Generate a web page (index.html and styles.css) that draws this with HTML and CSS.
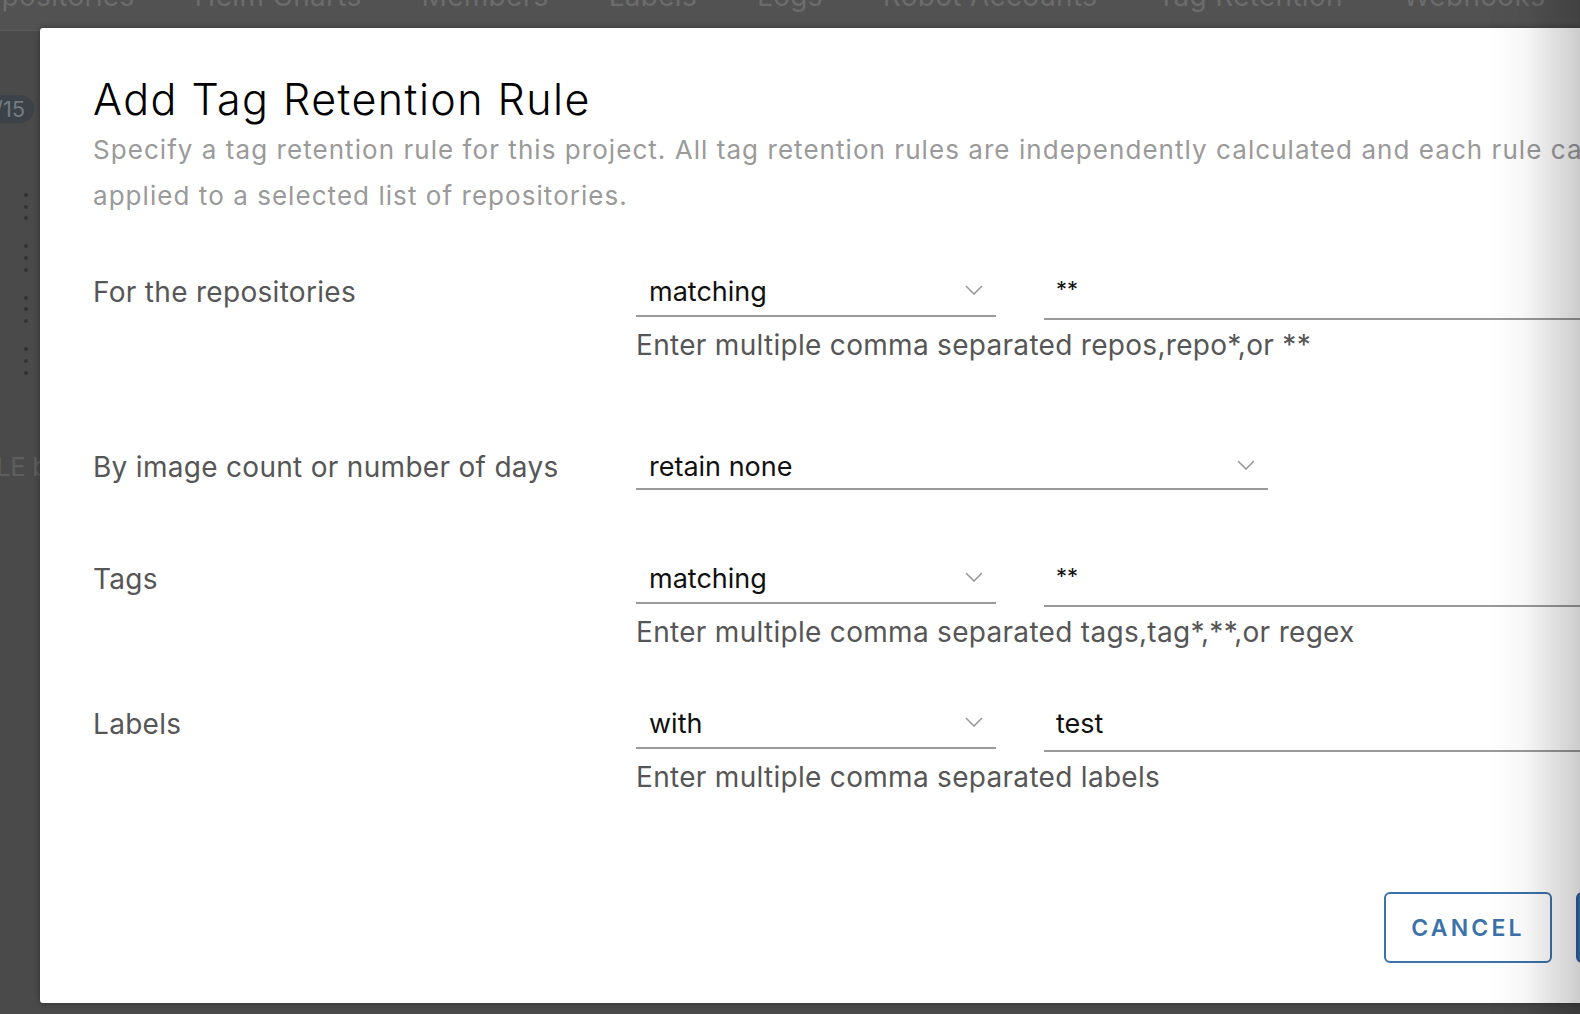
FILE: index.html
```html
<!DOCTYPE html>
<html lang="en">
<head>
<meta charset="utf-8">
<title>Add Tag Retention Rule</title>
<link rel="stylesheet" href="styles.css">
</head>
<body>
<div class="page">
  <nav class="tabs">
    <span class="tab first">Repositories</span>
    <span class="tab">Helm Charts</span>
    <span class="tab">Members</span>
    <span class="tab">Labels</span>
    <span class="tab">Logs</span>
    <span class="tab">Robot Accounts</span>
    <span class="tab active">Tag Retention</span>
    <span class="tab">Webhooks</span>
  </nav>
  <div class="content">
    <span class="badge">1/15</span>
    <div class="kebabs">
      <span class="kebab"><i></i><i></i><i></i></span>
      <span class="kebab"><i></i><i></i><i></i></span>
      <span class="kebab"><i></i><i></i><i></i></span>
      <span class="kebab"><i></i><i></i><i></i></span>
    </div>
    <div class="cut-text">LE b</div>
  </div>
</div>

<div class="modal">
  <h3 class="title">Add Tag Retention Rule</h3>
  <p class="desc">Specify a tag retention rule for this project. All tag retention rules are independently calculated and each rule can be<br>applied to a selected list of repositories.</p>

  <div class="form">
    <div class="row row-repos">
      <label class="lbl">For the repositories</label>
      <div class="sel">
        <span class="sel-text">matching</span>
        <svg class="chev" viewBox="0 0 18 10" width="18" height="10"><path d="M1 1 L9 9 L17 1" fill="none" stroke="#9a9a9a" stroke-width="1.6"/></svg>
      </div>
      <div class="inp"><span class="inp-text stars">**</span></div>
      <div class="help">Enter multiple comma separated repos,repo*,or **</div>
    </div>

    <div class="row row-count">
      <label class="lbl">By image count or number of days</label>
      <div class="sel sel-wide">
        <span class="sel-text">retain none</span>
        <svg class="chev" viewBox="0 0 18 10" width="18" height="10"><path d="M1 1 L9 9 L17 1" fill="none" stroke="#9a9a9a" stroke-width="1.6"/></svg>
      </div>
    </div>

    <div class="row row-tags">
      <label class="lbl">Tags</label>
      <div class="sel">
        <span class="sel-text">matching</span>
        <svg class="chev" viewBox="0 0 18 10" width="18" height="10"><path d="M1 1 L9 9 L17 1" fill="none" stroke="#9a9a9a" stroke-width="1.6"/></svg>
      </div>
      <div class="inp"><span class="inp-text stars">**</span></div>
      <div class="help">Enter multiple comma separated tags,tag*,**,or regex</div>
    </div>

    <div class="row row-labels">
      <label class="lbl">Labels</label>
      <div class="sel">
        <span class="sel-text">with</span>
        <svg class="chev" viewBox="0 0 18 10" width="18" height="10"><path d="M1 1 L9 9 L17 1" fill="none" stroke="#9a9a9a" stroke-width="1.6"/></svg>
      </div>
      <div class="inp"><span class="inp-text">test</span></div>
      <div class="help">Enter multiple comma separated labels</div>
    </div>
  </div>

  <div class="footer">
    <button class="btn btn-outline">CANCEL</button>
    <button class="btn btn-primary">ADD</button>
  </div>
</div>

<div class="edge-fade"></div>
</body>
</html>
```

FILE: styles.css
```css
html, body {
  margin: 0;
  padding: 0;
  width: 100%;
  height: 100%;
  overflow: hidden;
}

body {
  background: #4a4a4a;
  font-family: "Inter", "Liberation Sans", sans-serif;
  color: #565656;
}

/* background page behind the modal */
.page {
  display: flex;
  flex-direction: column;
  height: 100%;
}

.tabs {
  display: flex;
  align-items: flex-end;
  height: 30px;
  background: #525252;
  border-bottom: 1px solid #5a5a5a;
  overflow: hidden;
  white-space: nowrap;
}

.tab {
  font-size: 28px;
  line-height: 34px;
  color: #6c6c6c;
  margin-bottom: 17px;
  margin-right: 60px;
  letter-spacing: 0.3px;
  flex: none;
}

.tab.first {
  margin-left: -33px;
}

.content {
  flex: 1;
  display: flex;
  flex-direction: column;
  align-items: flex-start;
}

.badge {
  margin-top: 64px;
  margin-left: -26px;
  height: 28px;
  padding: 0 9px 0 12px;
  border-radius: 14px;
  background: #3c4248;
  color: #737b83;
  font-size: 22px;
  line-height: 28px;
}

.kebabs {
  display: flex;
  flex-direction: column;
  gap: 24px;
  margin-top: 70px;
  margin-left: 24px;
}

.kebab {
  display: flex;
  flex-direction: column;
  gap: 7.7px;
}

.kebab i {
  display: block;
  width: 4px;
  height: 4px;
  border-radius: 50%;
  background: #333333;
}

.cut-text {
  margin-top: 74px;
  margin-left: -4px;
  font-size: 26px;
  line-height: 36px;
  color: #5e5e5e;
  white-space: nowrap;
  letter-spacing: -0.5px;
}

/* modal */
.modal {
  position: absolute;
  left: 40px;
  top: 28px;
  width: 1709px;
  height: 975px;
  box-sizing: border-box;
  padding: 0 53px;
  background: #ffffff;
  border-radius: 3px;
  box-shadow: 0 0 6px rgba(0, 0, 0, 0.35);
  display: flex;
  flex-direction: column;
}

.title {
  margin: 45px 0 0;
  font-size: 43px;
  line-height: 52px;
  font-weight: 300;
  color: #000000;
  letter-spacing: 1.45px;
}

.desc {
  margin: 2px 0 0;
  font-size: 26px;
  line-height: 46px;
  color: #9a9a9a;
  white-space: nowrap;
  letter-spacing: 1.05px;
}

.form {
  margin-top: 52px;
  display: flex;
  flex-direction: column;
}

.row {
  display: grid;
  grid-template-columns: 495px 360px 1fr;
  column-gap: 48px;
  align-items: start;
}

.row-repos { margin-bottom: 83px; }
.row-count { margin-bottom: 68px; }
.row-tags { margin-bottom: 53px; }

.lbl {
  font-size: 28px;
  line-height: 42px;
  color: #565656;
  white-space: nowrap;
  letter-spacing: 0.3px;
}

.sel {
  position: relative;
  height: 44px;
  border-bottom: 2px solid #9a9a9a;
  display: flex;
  align-items: flex-start;
  padding-left: 13px;
}

.sel-wide {
  width: 632px;
  box-sizing: border-box;
}

.sel-text {
  font-size: 27px;
  line-height: 42px;
  color: #111111;
}

.chev {
  position: absolute;
  right: 13px;
  top: 14px;
}

.inp {
  height: 47px;
  border-bottom: 2px solid #9a9a9a;
  padding-left: 12px;
  margin-right: -60px;
}

.inp-text {
  font-size: 27px;
  line-height: 42px;
  color: #111111;
}

.inp-text.stars {
  font-size: 22px;
  line-height: 36px;
}

.help {
  grid-column: 2 / 4;
  margin-top: 7px;
  font-size: 28px;
  line-height: 36px;
  color: #565656;
  white-space: nowrap;
  letter-spacing: 0.3px;
}

.footer {
  margin-top: auto;
  padding-bottom: 40px;
  display: flex;
  justify-content: flex-end;
  gap: 24px;
}

.btn {
  height: 71px;
  box-sizing: border-box;
  border-radius: 6px;
  font-family: "Inter", "Liberation Sans", sans-serif;
  font-size: 23px;
  font-weight: 600;
  letter-spacing: 3.2px;
  cursor: pointer;
}

.btn-outline {
  width: 168px;
  background: #ffffff;
  border: 2px solid #3b72aa;
  color: #3b72aa;
}

.btn-primary {
  width: 120px;
  background: #3b72aa;
  border: 2px solid #2f609a;
  color: #ffffff;
}

/* fade over the right edge of the viewport */
.edge-fade {
  position: fixed;
  top: 0;
  right: 0;
  width: 92px;
  height: 100%;
  pointer-events: none;
  background: linear-gradient(to right, rgba(0, 0, 0, 0), rgba(0, 0, 0, 0.03) 40%, rgba(0, 0, 0, 0.2));
}
```
